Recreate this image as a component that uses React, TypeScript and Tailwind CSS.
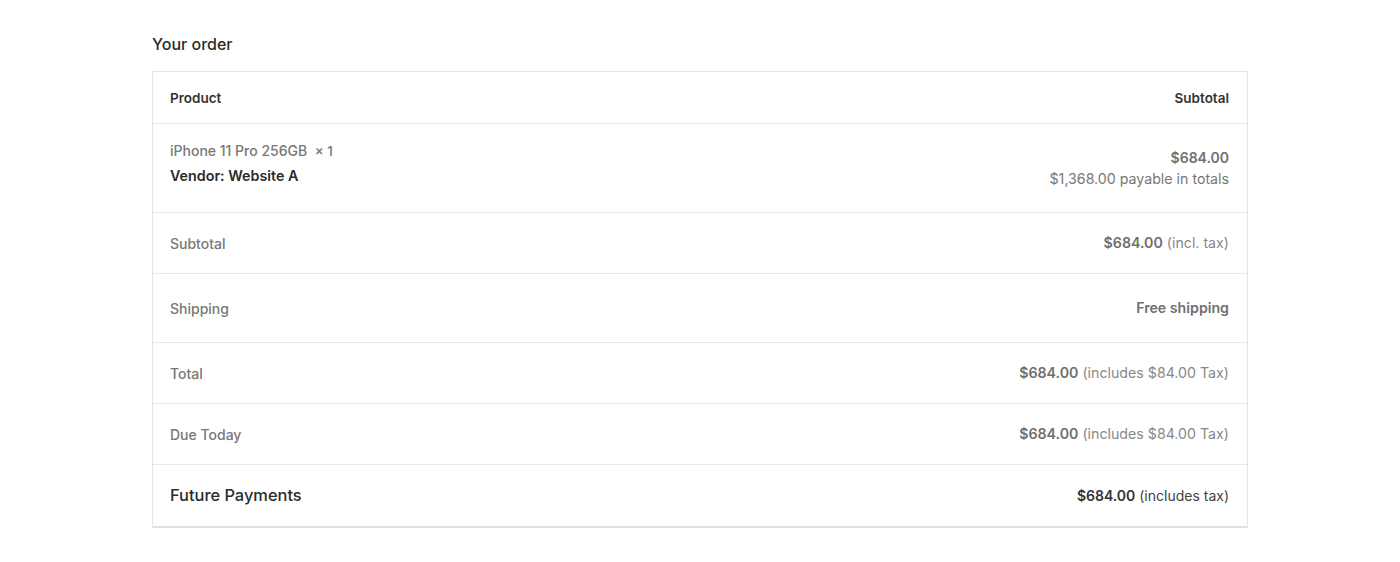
import React from "react";

export default function App() {
  const font = { fontFamily: "Inter, 'Noto Sans', 'Liberation Sans', sans-serif" };
  return (
    <div className="w-[1400px] h-[562px] bg-white" style={font}>
      <div className="ml-[152px] w-[1096px] pt-[33px]">
        <h2 className="text-[16px] leading-[22px] font-medium text-[#2b2b2b] mb-[16px]">Your order</h2>
        <div className="border border-[#e6e6e6] border-b-2 border-b-[#e2e2e2]">
          <div className="h-[52px] pl-[17px] pr-[18px] flex items-center justify-between border-b border-[#e9e9e9] text-[13.5px] font-semibold text-[#333]">
            <span className="pt-[1px]">Product</span>
            <span className="pt-[1px]">Subtotal</span>
          </div>
          <div className="h-[89px] pl-[17px] pr-[18px] flex justify-between border-b border-[#e9e9e9]">
            <div className="pt-[17px]">
              <div className="text-[14px] leading-[20px] text-[#777] font-medium">
                iPhone 11 Pro 256GB&nbsp; <span className="text-[13.5px]">× 1</span>
              </div>
              <div className="mt-[5px] text-[14.3px] leading-[20px] text-[#2b2b2b] font-semibold">Vendor: Website A</div>
            </div>
            <div className="flex flex-col items-end justify-center">
              <div className="text-[14px] leading-[20px] font-semibold text-[#707070]">$684.00</div>
              <div className="text-[14.2px] leading-[21px] text-[#777]">$1,368.00 payable in totals</div>
            </div>
          </div>
          <Row h="h-[61px]" label="Subtotal">
            <span className="font-semibold text-[#6f6f6f]">$684.00</span> <span className="text-[#888]">(incl. tax)</span>
          </Row>
          <Row h="h-[69px]" label="Shipping">
            <span className="font-semibold text-[#6f6f6f]">Free shipping</span>
          </Row>
          <Row h="h-[61px]" label="Total">
            <span className="font-semibold text-[#6f6f6f]">$684.00</span> <span className="text-[#888]">(includes $84.00 Tax)</span>
          </Row>
          <Row h="h-[61px]" label="Due Today">
            <span className="font-semibold text-[#6f6f6f]">$684.00</span> <span className="text-[#888]">(includes $84.00 Tax)</span>
          </Row>
          <div className="h-[61px] pl-[17px] pr-[18px] flex items-center justify-between">
            <span className="text-[16.4px] font-medium text-[#2b2b2b]">Future Payments</span>
            <span className="text-[14px]">
              <span className="font-semibold text-[#333]">$684.00</span> <span className="text-[#444]">(includes tax)</span>
            </span>
          </div>
        </div>
      </div>
    </div>
  );
}

function Row({ h, label, children }: { h: string; label: string; children: React.ReactNode }) {
  return (
    <div className={`${h} pl-[17px] pr-[18px] flex items-center justify-between border-b border-[#e9e9e9]`}>
      <span className="text-[14px] font-medium text-[#777]">{label}</span>
      <span className="text-[14.2px]">{children}</span>
    </div>
  );
}
